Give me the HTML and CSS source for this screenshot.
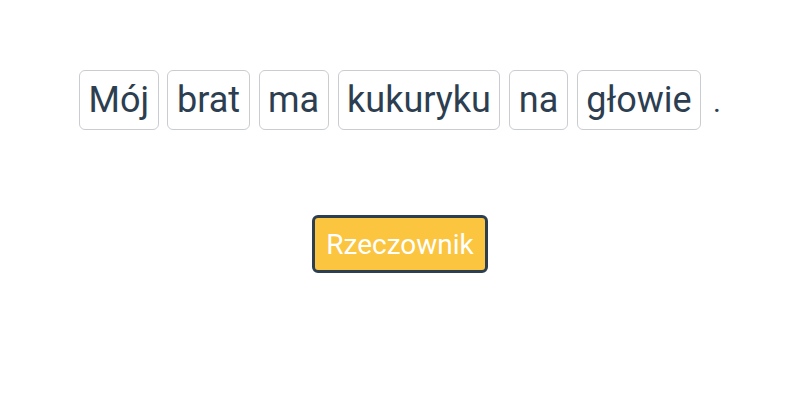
FILE: index.html
```html
<!DOCTYPE html>
<html lang="pl">
<head>
  <meta charset="UTF-8" />
  <meta name="viewport" content="width=device-width, initial-scale=1.0"/>
  <title>Części mowy</title>
  <link rel="stylesheet" href="styles.css">
</head>
<body>

<div class="container">
  <div class="sentence">
    <span class="word">Mój</span>
    <span class="word">brat</span>
    <span class="word">ma</span>
    <span class="word">kukuryku</span>
    <span class="word">na</span>
    <span class="word">głowie</span>
    <span class="dot">.</span>
  </div>

  <div class="answers">
    <button class="answer">Rzeczownik</button>
  </div>
</div>

</body>
</html>
```

FILE: styles.css
```css
body {
  font-family: Roboto, 'Liberation Sans', sans-serif;
  background: #fff;
  margin: 0; padding: 0;
  color: #2c3e50;
}
.container {
  padding-top: 70px;
  text-align: center;
}
.sentence {
  font-size: 36px;
  line-height: 58px;
}
.word {
  display: inline-block;
  padding: 0 8.5px;
  border: 1px solid #c9cdd1;
  border-radius: 6px;
}
.dot {
  font-size: 30px;
  margin-left: 3px;
}
.answers {
  margin-top: 84px;
}
.answer {
  font-family: inherit;
  font-size: 28px;
  color: #fff;
  background: #fbc53f;
  border: 3px solid #2c3e50;
  border-radius: 6px;
  padding: 0 11px;
  height: 58px;
  cursor: pointer;
}
```
